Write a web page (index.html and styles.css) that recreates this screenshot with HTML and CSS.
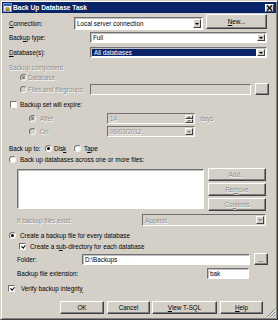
FILE: index.html
```html
<!DOCTYPE html>
<html>
<head>
<meta charset="utf-8">
<title>Back Up Database Task</title>
<link rel="stylesheet" href="styles.css">
</head>
<body>
<div class="window">
  <div class="titlebar">
    <svg class="ticon" width="9" height="9" viewBox="0 0 9 9">
      <rect x="0.5" y="0.5" width="8" height="8" fill="#e8eef8" stroke="#7d97c8"/>
      <rect x="1" y="1" width="7" height="2" fill="#2f5fb8"/>
      <ellipse cx="4.5" cy="5" rx="2.2" ry="0.9" fill="#c89a2c"/>
      <rect x="2.3" y="5" width="4.4" height="2.2" fill="#c89a2c"/>
      <ellipse cx="4.5" cy="7.2" rx="2.2" ry="0.9" fill="#a47a18"/>
    </svg>
    <span class="title">Back Up Database Task</span>
    <span class="close"><svg width="7" height="6" viewBox="0 0 7 6"><path d="M1 0.5 L6 5.5 M6 0.5 L1 5.5" stroke="#000" stroke-width="1.2"/></svg></span>
  </div>
  <div class="body">
    <div class="row r-conn">
      <span class="lbl l-conn"><u>C</u>onnection:</span>
      <div class="combo f-conn"><span class="val">Local server connection</span><span class="dd"></span></div>
      <button class="btn b-new"><u>N</u>ew...</button>
    </div>
    <div class="row r-type">
      <span class="lbl l-type">Back<u>u</u>p type:</span>
      <div class="combo f-wide"><span class="val">Full</span><span class="dd"></span></div>
    </div>
    <div class="row r-db">
      <span class="lbl l-type"><u>D</u>atabase(s):</span>
      <div class="combo f-wide sel"><span class="val">All databases</span><span class="dd"></span></div>
    </div>
    <div class="row r-comp"><span class="lbl dis">Backup component</span></div>
    <div class="row r-dbopt"><span class="radio on dis"></span><span class="lbl dis l-r">Database</span></div>
    <div class="row r-files">
      <span class="radio dis"></span><span class="lbl dis l-r l-files">Files and filegroups:</span>
      <div class="field dis f-files"></div>
      <button class="btn dots dis">...</button>
    </div>
    <div class="row r-exp"><span class="check"></span><span class="lbl l-c">Backup set will expire:</span></div>
    <div class="row r-after">
      <span class="radio on dis"></span><span class="lbl dis l-after">After</span>
      <div class="field dis f-num"><span class="val">14</span><span class="spin"><i class="up"></i><i class="down"></i></span></div>
      <span class="lbl dis days">days</span>
    </div>
    <div class="row r-on">
      <span class="radio dis"></span><span class="lbl dis l-after">On</span>
      <div class="combo dis f-num"><span class="val">06/03/2012</span><span class="dd"></span></div>
    </div>
    <div class="row r-to">
      <span class="lbl l-to">Back up to:</span>
      <span class="radio on"></span><span class="lbl l-disk">Dis<u>k</u></span>
      <span class="radio"></span><span class="lbl l-tape">T<u>a</u>pe</span>
    </div>
    <div class="row r-across"><span class="radio"></span><span class="lbl l-c2">Back up databases across one or more files:</span></div>
    <div class="row r-list">
      <div class="listbox"></div>
      <div class="btncol">
        <button class="btn dis">Add...</button>
        <button class="btn dis">Re<u>m</u>ove</button>
        <button class="btn dis">Co<u>n</u>tents</button>
      </div>
    </div>
    <div class="row r-exist">
      <span class="lbl dis l-exist">If backup files exist:</span>
      <div class="combo dis f-append"><span class="val">Append</span><span class="dd"></span></div>
    </div>
    <div class="row r-every"><span class="radio on"></span><span class="lbl l-c2">Create a backup file for every database</span></div>
    <div class="row r-sub"><span class="check on"></span><span class="lbl l-c2">Create a s<u>u</u>b-directory for each database</span></div>
    <div class="row r-folder">
      <span class="lbl l-folder">Folder:</span>
      <div class="field f-folder"><span class="val">D:\Backups</span></div>
      <button class="btn dots">...</button>
    </div>
    <div class="row r-ext">
      <span class="lbl l-ext">Backup file extension:</span>
      <div class="field f-ext"><span class="val">bak</span></div>
    </div>
    <div class="row r-verify"><span class="check on"></span><span class="lbl l-v">Verify backup integrit<u>y</u></span></div>
    <div class="row r-btns">
      <button class="btn b-ok">OK</button>
      <button class="btn b-cancel">Cancel</button>
      <button class="btn b-sql"><u>V</u>iew T-SQL</button>
      <button class="btn b-help"><u>H</u>elp</button>
    </div>
  </div>
  <svg class="grip" width="10" height="10" viewBox="0 0 10 10">
    <path d="M9 1 L1 9 M9 4 L4 9 M9 7 L7 9" stroke="#808080" stroke-width="1"/>
    <path d="M9.8 1.8 L1.8 9.8 M9.8 4.8 L4.8 9.8 M9.8 7.8 L7.8 9.8" stroke="#fff" stroke-width="0.8"/>
  </svg>
</div>
</body>
</html>
```
FILE: styles.css
```css
* { box-sizing: border-box; margin: 0; padding: 0; }
html, body { margin: 0; background: #d4d0c8; }
body {
  font-family: "Liberation Sans", Arial, sans-serif;
  font-size: 6.3px;
  color: #000;
}
.window {
  position: relative;
  width: 278px;
  height: 320px;
  background: #d4d0c8;
  border: 1px solid;
  border-color: #d4d0c8 #404040 #404040 #d4d0c8;
  box-shadow: inset 1px 1px #fff, inset -1px -1px #808080;
  padding: 1px;
}
.titlebar {
  height: 11px;
  background: #0a246a;
  display: flex;
  align-items: center;
  padding-left: 1px;
}
.ticon { flex-shrink: 0; }
.title {
  color: #fff;
  font-weight: bold;
  font-size: 6.6px;
  margin-left: 1px;
  white-space: nowrap;
}
.close {
  margin-left: auto;
  margin-right: 2px;
  width: 9px;
  height: 8px;
  background: #d4d0c8;
  border: 1px solid;
  border-color: #fff #404040 #404040 #fff;
  display: flex;
  align-items: center;
  justify-content: center;
}
.body { display: flex; flex-direction: column; }
.row { display: flex; align-items: center; flex-shrink: 0; }
.row > * { flex-shrink: 0; }
.lbl { white-space: nowrap; }
.dis { color: #8a8a8a; text-shadow: 0.6px 0.6px 0 #fff; }
u { text-decoration: underline; text-underline-offset: 1px; }

/* controls */
.field, .combo {
  display: flex;
  align-items: stretch;
  background: #fff;
  border: 1px solid;
  border-color: #707070 #fff #fff #707070;
  box-shadow: inset 1px 1px #c0c0c0;
}
.field.dis, .combo.dis { background: #d4d0c8; box-shadow: none; }
.val {
  flex: 1;
  padding-left: 2px;
  white-space: nowrap;
  overflow: hidden;
  display: flex;
  align-items: center;
}
.dd, .spin {
  width: 8px;
  flex-shrink: 0;
  margin: 1px;
  background: #d4d0c8;
  border: 1px solid;
  border-color: #fff #404040 #404040 #fff;
  display: flex;
  align-items: center;
  justify-content: center;
}
.dd::after {
  content: "";
  border-top: 2px solid #000;
  border-left: 2px solid transparent;
  border-right: 2px solid transparent;
}
.combo.dis .dd::after { border-top-color: #808080; }
.combo.sel .val { background: #0a246a; color: #fff; margin: 1px 0 1px 1px; }
.spin {
  flex-direction: column;
  padding: 0;
  border: none;
  background: none;
  gap: 0;
}
.spin i {
  flex: 1;
  width: 100%;
  background: #d4d0c8;
  border: 1px solid;
  border-color: #fff #404040 #404040 #fff;
  display: flex;
  align-items: center;
  justify-content: center;
}
.spin i.up::after {
  content: "";
  border-bottom: 2px solid #808080;
  border-left: 2px solid transparent;
  border-right: 2px solid transparent;
}
.spin i.down::after {
  content: "";
  border-top: 2px solid #808080;
  border-left: 2px solid transparent;
  border-right: 2px solid transparent;
}
.btn {
  font: inherit;
  color: #000;
  background: #d4d0c8;
  border: 1px solid;
  border-color: #fff #404040 #404040 #fff;
  box-shadow: inset -1px -1px #808080;
  display: flex;
  align-items: center;
  justify-content: center;
  white-space: nowrap;
}
.btn.dis { color: #8a8a8a; }
.radio {
  position: relative;
  width: 7px;
  height: 7px;
  border-radius: 50%;
  background: #fff;
  border: 1px solid;
  border-color: #707070 #f4f4f4 #f4f4f4 #707070;
}
.radio.dis { background: #d4d0c8; }
.radio.on::after {
  content: "";
  position: absolute;
  left: 1px;
  top: 1px;
  width: 3px;
  height: 3px;
  border-radius: 50%;
  background: #000;
}
.radio.dis.on::after { background: #808080; }
.check {
  position: relative;
  width: 7px;
  height: 7px;
  background: #fff;
  border: 1px solid;
  border-color: #707070 #f4f4f4 #f4f4f4 #707070;
}
.check.on::after {
  content: "";
  position: absolute;
  left: 1.5px;
  top: 0;
  width: 1.6px;
  height: 3px;
  border-right: 1.3px solid #000;
  border-bottom: 1.3px solid #000;
  transform: rotate(40deg);
}

/* rows */
.r-conn { margin-top: 1px; height: 16px; align-items: flex-start; padding-left: 7px; }
.l-conn { width: 65px; height: 13px; margin-top: 3px; display: flex; align-items: center; }
.f-conn { width: 129px; height: 13px; margin-top: 3px; }
.b-new { width: 61px; height: 15px; margin-left: 3px; }

.r-type { margin-top: 2px; height: 11px; padding-left: 7px; }
.r-db { margin-top: 4px; height: 11px; padding-left: 7px; }
.l-type { width: 81px; }
.f-wide { width: 177px; height: 11px; }

.r-comp { margin-top: 4px; height: 10px; padding-left: 7px; }
.r-dbopt { margin-top: 0; height: 10px; padding-left: 18px; }
.l-r { margin-left: 1px; }
.r-files { margin-top: 1px; height: 12px; padding-left: 18px; }
.l-files { width: 62px; }
.f-files { width: 161px; height: 11px; }
.dots { width: 14px; height: 12px; margin-left: 4px; }

.r-exp { margin-top: 4px; height: 10px; padding-left: 8px; }
.l-c { margin-left: 3px; }

.r-after { margin-top: 4px; height: 11px; padding-left: 27px; }
.r-on { margin-top: 2px; height: 11px; padding-left: 27px; }
.l-after { width: 67px; margin-left: 4px; }
.f-num { width: 88px; height: 11px; }
.days { margin-left: 5px; }

.r-to { margin-top: 6px; height: 10px; padding-left: 7px; }
.l-to { width: 36px; }
.l-disk { width: 20px; margin-left: 2px; }
.l-tape { margin-left: 3px; }

.r-across { margin-top: 1px; height: 10px; padding-left: 7px; }
.l-c2 { margin-left: 4px; }

.r-list { margin-top: 4px; height: 43px; padding-left: 15px; align-items: flex-start; }
.listbox {
  width: 187px;
  height: 40px;
  margin-top: 1px;
  background: #fff;
  border: 1px solid;
  border-color: #707070 #fff #fff #707070;
  box-shadow: inset 1px 1px #c0c0c0;
}
.btncol { margin-left: 4px; width: 58px; display: flex; flex-direction: column; gap: 2px; }
.btncol .btn { height: 13px; }

.r-exist { margin-top: 3px; height: 12px; padding-left: 15px; }
.l-exist { width: 125px; }
.f-append { width: 124px; height: 12px; }

.r-every { margin-top: 4px; height: 10px; padding-left: 7px; }
.r-sub { margin-top: 1px; height: 10px; padding-left: 17px; }

.r-folder { margin-top: 2px; height: 12px; padding-left: 15px; }
.l-folder { width: 65px; }
.f-folder { width: 168px; height: 11px; }

.r-ext { margin-top: 3px; height: 11px; padding-left: 15px; }
.l-ext { width: 190px; }
.f-ext { width: 42px; height: 11px; }

.r-verify { margin-top: 4px; height: 10px; padding-left: 6px; }
.l-v { margin-left: 6px; }

.r-btns { margin-top: 8px; height: 13px; padding-left: 58px; }
.r-btns .btn { height: 13px; }
.b-ok { width: 44px; }
.b-cancel { width: 43px; margin-left: 3px; }
.b-sql { width: 65px; margin-left: 2px; }
.b-help { width: 43px; margin-left: 3px; }

.grip { position: absolute; right: 1px; bottom: 1px; }
```
